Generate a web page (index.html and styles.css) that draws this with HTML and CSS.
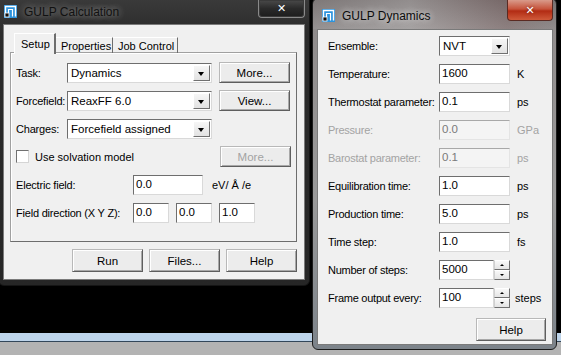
FILE: index.html
```html
<!DOCTYPE html>
<html lang="en">
<head>
    <meta charset="UTF-8">
    <title>GULP</title>
    <link rel="stylesheet" href="styles.css">
</head>
<body>
    <div class="desktop">

        <!-- GULP Calculation window -->
        <div class="window calc">
            <div class="titlebar">
                <svg class="app-icon" width="13" height="13" viewBox="0 0 13 13">
                    <rect width="13" height="13" fill="#2c93dd"/>
                    <path d="M1.5 11.5 V1.5 H11.5 V11.5" fill="none" stroke="#fff" stroke-width="1.4"/>
                    <path d="M4.5 8 V4.5 H8.5 V11.5" fill="none" stroke="#fff" stroke-width="1.2"/>
                    <rect x="1" y="8" width="4" height="4" fill="#111" stroke="#fff" stroke-width="0.8"/>
                </svg>
                <span class="title">GULP Calculation</span>
                <div class="close dark">&#10005;</div>
            </div>
            <div class="client">
                <div class="tabs">
                    <div class="tab active">Setup</div>
                    <div class="tab">Properties</div>
                    <div class="tab">Job Control</div>
                </div>
                <div class="panel">
                    <div class="row">
                        <span class="lbl lbl-short">Task:</span>
                        <div class="combo combo-wide"><span class="value">Dynamics</span><span class="drop"></span></div>
                        <button class="btn">More...</button>
                    </div>
                    <div class="row">
                        <span class="lbl lbl-short">Forcefield:</span>
                        <div class="combo combo-wide"><span class="value">ReaxFF 6.0</span><span class="drop"></span></div>
                        <button class="btn">View...</button>
                    </div>
                    <div class="row">
                        <span class="lbl lbl-short">Charges:</span>
                        <div class="combo combo-wide"><span class="value">Forcefield assigned</span><span class="drop"></span></div>
                    </div>
                    <div class="row">
                        <span class="check"></span>
                        <span class="check-text">Use solvation model</span>
                        <button class="btn disabled">More...</button>
                    </div>
                    <div class="row">
                        <span class="lbl lbl-long">Electric field:</span>
                        <div class="field f-field">0.0</div>
                        <span class="unit">eV/ Å /e</span>
                    </div>
                    <div class="row">
                        <span class="lbl lbl-long">Field direction (X Y Z):</span>
                        <div class="xyz">
                            <div class="field f-small">0.0</div>
                            <div class="field f-small">0.0</div>
                            <div class="field f-small">1.0</div>
                        </div>
                    </div>
                </div>
                <div class="actions">
                    <button class="btn">Run</button>
                    <button class="btn">Files...</button>
                    <button class="btn">Help</button>
                </div>
            </div>
        </div>

        <!-- GULP Dynamics window -->
        <div class="window dyn">
            <div class="titlebar">
                <svg class="app-icon" width="13" height="13" viewBox="0 0 13 13">
                    <rect width="13" height="13" fill="#2c93dd"/>
                    <path d="M1.5 11.5 V1.5 H11.5 V11.5" fill="none" stroke="#fff" stroke-width="1.4"/>
                    <path d="M4.5 8 V4.5 H8.5 V11.5" fill="none" stroke="#fff" stroke-width="1.2"/>
                    <rect x="1" y="8" width="4" height="4" fill="#111" stroke="#fff" stroke-width="0.8"/>
                </svg>
                <span class="title">GULP Dynamics</span>
                <div class="close red">&#10005;</div>
            </div>
            <div class="client dyn-client">
                <div class="form">
                    <div class="frow">
                        <span class="flbl">Ensemble:</span>
                        <div class="combo combo-small"><span class="value">NVT</span><span class="drop"></span></div>
                    </div>
                    <div class="frow">
                        <span class="flbl">Temperature:</span>
                        <div class="field f-dyn">1600</div>
                        <span class="unit">K</span>
                    </div>
                    <div class="frow">
                        <span class="flbl">Thermostat parameter:</span>
                        <div class="field f-dyn">0.1</div>
                        <span class="unit">ps</span>
                    </div>
                    <div class="frow off">
                        <span class="flbl">Pressure:</span>
                        <div class="field f-dyn">0.0</div>
                        <span class="unit">GPa</span>
                    </div>
                    <div class="frow off">
                        <span class="flbl">Barostat parameter:</span>
                        <div class="field f-dyn">0.1</div>
                        <span class="unit">ps</span>
                    </div>
                    <div class="frow">
                        <span class="flbl">Equilibration time:</span>
                        <div class="field f-dyn">1.0</div>
                        <span class="unit">ps</span>
                    </div>
                    <div class="frow">
                        <span class="flbl">Production time:</span>
                        <div class="field f-dyn">5.0</div>
                        <span class="unit">ps</span>
                    </div>
                    <div class="frow">
                        <span class="flbl">Time step:</span>
                        <div class="field f-dyn">1.0</div>
                        <span class="unit">fs</span>
                    </div>
                    <div class="frow">
                        <span class="flbl">Number of steps:</span>
                        <div class="field f-spin">5000</div>
                        <div class="spin"><span class="up"></span><span class="down"></span></div>
                    </div>
                    <div class="frow">
                        <span class="flbl">Frame output every:</span>
                        <div class="field f-spin">100</div>
                        <div class="spin"><span class="up"></span><span class="down"></span></div>
                        <span class="unit unit-steps">steps</span>
                    </div>
                </div>
                <div class="dyn-actions">
                    <button class="btn">Help</button>
                </div>
            </div>
        </div>

    </div>
</body>
</html>
```

FILE: styles.css
```css
body {
    margin: 0;
    padding: 0;
    font-family: "Liberation Sans", Arial, sans-serif;
    font-size: 11px;
    color: #000;
    background: #000;
    white-space: nowrap;
}

/* the desktop behind the windows */
.desktop {
    position: relative;
    width: 561px;
    height: 355px;
    overflow: hidden;
    background: linear-gradient(to bottom, #000 0 333px, #bdd4ea 333px 341px, #33475a 341px 342px, #b3b3b3 342px);
}

.window {
    position: absolute;
    box-sizing: border-box;
    display: flex;
    flex-direction: column;
}

/* left window */
.calc {
    left: -2px;
    top: -8px;
    width: 312px;
    height: 294px;
    background: linear-gradient(to bottom, #3d3d3d, #2b2b2b 40px, #262626);
    border: 1px solid #151515;
    border-radius: 6px;
}

/* right window */
.dyn {
    left: 312px;
    top: -2px;
    width: 245px;
    height: 352px;
    background: linear-gradient(to bottom, #767070, #908c8c 30px, #9a9a9a 200px, #7c838a);
    border: 1px solid #1c1c1c;
    border-radius: 6px;
}

.titlebar {
    position: relative;
    display: flex;
    align-items: center;
    flex-shrink: 0;
    box-sizing: border-box;
}

.calc .titlebar {
    height: 31px;
    padding: 6px 0 0 5px;
}

.dyn .titlebar {
    height: 30px;
    padding: 3px 0 0 9px;
    background: linear-gradient(to right, rgba(255,255,255,0.05), rgba(255,255,255,0.2) 40%, rgba(120,40,40,0.12) 80%, rgba(0,0,0,0));
}

.app-icon {
    display: block;
    flex-shrink: 0;
}

.title {
    margin-left: 7px;
    font-size: 12px;
    color: #111;
    text-shadow: 0 0 6px rgba(255,255,255,0.45), 0 0 10px rgba(255,255,255,0.3);
}

.dyn .title {
    color: #0c0c0c;
    text-shadow: 0 0 6px rgba(255,255,255,0.7), 0 0 10px rgba(255,255,255,0.4);
}

/* close buttons sit over the title bar */
.close {
    position: absolute;
    box-sizing: border-box;
    display: flex;
    justify-content: center;
    align-items: center;
    color: #fff;
    font-size: 11px;
    font-weight: bold;
    font-family: "DejaVu Sans", sans-serif;
    border-radius: 0 0 4px 4px;
}

.close.dark {
    left: 259px;
    top: 7px;
    width: 47px;
    height: 18px;
    border: 1px solid #8a8a8a;
    border-top: none;
    background: linear-gradient(to bottom, #4a4a4a, #2a2a2a 50%, #1d1d1d);
    box-shadow: inset 0 0 0 1px #3a3a3a;
}

.close.red {
    left: 194px;
    top: 1px;
    width: 46px;
    height: 21px;
    border: 1px solid #5a2a22;
    border-top: none;
    background: linear-gradient(to bottom, #d99a8a, #c6533b 45%, #b22c14 55%, #cf5a3a);
    text-shadow: 0 0 3px #6a1a0a;
}

.client {
    box-sizing: border-box;
    background: #f0f0f0;
    border: 1px solid #7a7a7a;
}

.calc .client {
    margin: 0 4px 5px 4px;
    height: 256px;
    padding: 8px 7px 0 6px;
}

.dyn .client {
    margin: 0 3px 4px 4px;
    height: 316px;
    padding: 6px 6px 0 10px;
}

/* tabs */
.tabs {
    display: flex;
    align-items: flex-end;
    height: 20px;
    padding-left: 4px;
}

.tab {
    box-sizing: border-box;
    height: 16px;
    padding: 1px 0 0 5px;
    line-height: 14px;
    border-right: 1px solid #6d6d6d;
    border-top: 1px solid #fff;
}

.tab.active {
    position: relative;
    z-index: 1;
    height: 21px;
    width: 42px;
    margin-bottom: -1px;
    padding: 3px 0 0 6px;
    background: #f0f0f0;
    border-left: 1px solid #fff;
    border-right: 2px solid #6d6d6d;
}

.tab:nth-child(2) {
    width: 57px;
}

.tab:nth-child(3) {
    width: 65px;
}

.panel {
    box-sizing: border-box;
    height: 190px;
    margin-top: -1px;
    padding: 9px 0 0 5px;
    border: 1px solid #a0a0a0;
    border-right-color: #6d6d6d;
    border-bottom-color: #6d6d6d;
    box-shadow: inset 1px 1px #fff;
    display: flex;
    flex-direction: column;
    gap: 7px;
}

.row {
    display: flex;
    align-items: center;
    height: 21px;
}

.lbl {
    flex-shrink: 0;
    letter-spacing: -0.2px;
}

.lbl-short {
    width: 51px;
}

.lbl-long {
    width: 117px;
}

/* combo boxes */
.combo {
    box-sizing: border-box;
    display: flex;
    align-items: center;
    height: 20px;
    background: #fff;
    border: 1px solid;
    border-color: #6e6e6e #d9d9d9 #d9d9d9 #6e6e6e;
    padding: 1px;
}

.combo-wide {
    width: 145px;
}

.combo-small {
    width: 71px;
}

.combo .value {
    flex: 1;
    padding-left: 2px;
    font-size: 11.5px;
}

.drop {
    position: relative;
    box-sizing: border-box;
    width: 17px;
    height: 16px;
    background: linear-gradient(to bottom, #f6f6f6, #e2e2e2);
    border: 1px solid;
    border-color: #fff #707070 #707070 #fff;
}

.drop::after {
    content: "";
    position: absolute;
    left: 4px;
    top: 6px;
    border-left: 3.5px solid transparent;
    border-right: 3.5px solid transparent;
    border-top: 4px solid #000;
}

/* buttons */
.btn {
    box-sizing: border-box;
    width: 71px;
    height: 21px;
    padding: 0;
    margin-left: 7px;
    font-family: inherit;
    font-size: 11.5px;
    color: #000;
    background: #ececec;
    border: 1px solid;
    border-color: #b8b8b8 #5e5e5e #5e5e5e #b8b8b8;
    box-shadow: inset 1px 1px #fff, inset -1px -1px #a8a8a8;
}

.btn.disabled {
    margin-left: auto;
    margin-right: 5px;
    color: #a3a3a3;
}

.check {
    box-sizing: border-box;
    width: 13px;
    height: 13px;
    background: #fff;
    border: 1px solid;
    border-color: #707070 #d5d5d5 #d5d5d5 #707070;
}

.check-text {
    margin-left: 6px;
}

/* text fields */
.field {
    box-sizing: border-box;
    height: 20px;
    padding: 2px 0 0 2px;
    background: #fff;
    font-size: 11.5px;
    border: 1px solid;
    border-color: #6e6e6e #d9d9d9 #d9d9d9 #6e6e6e;
}

.f-field {
    width: 70px;
}

.f-small {
    width: 36px;
}

.xyz {
    display: flex;
    gap: 7px;
}

.unit {
    margin-left: 9px;
}

.actions {
    display: flex;
    justify-content: flex-end;
    margin-top: 7px;
}

.actions .btn {
    height: 23px;
    margin-left: 6px;
}

/* dynamics form */
.form {
    display: flex;
    flex-direction: column;
    gap: 8px;
}

.frow {
    display: flex;
    align-items: center;
    height: 20px;
}

.flbl {
    width: 111px;
    flex-shrink: 0;
    letter-spacing: -0.25px;
}

.f-dyn {
    width: 71px;
}

.frow .unit {
    margin-left: 7px;
}

.frow.off .flbl,
.frow.off .unit {
    color: #a3a3a3;
}

.frow.off .field {
    background: #f4f4f4;
    color: #7a7a7a;
    border-color: #a8a8a8 #e4e4e4 #e4e4e4 #a8a8a8;
}

.f-spin {
    width: 55px;
}

.spin {
    box-sizing: border-box;
    width: 16px;
    height: 20px;
    display: flex;
    flex-direction: column;
}

.spin span {
    position: relative;
    flex: 1;
    background: linear-gradient(to bottom, #f8f8f8, #e4e4e4);
    border: 1px solid;
    border-color: #fff #707070 #707070 #d0d0d0;
}

.spin .up::after,
.spin .down::after {
    content: "";
    position: absolute;
    left: 5px;
    top: 3px;
    border-left: 2px solid transparent;
    border-right: 2px solid transparent;
}

.spin .up::after {
    border-bottom: 2px solid #000;
}

.spin .down::after {
    border-top: 2px solid #000;
}

.unit-steps {
    margin-left: 5px !important;
}

.dyn-actions {
    display: flex;
    justify-content: flex-end;
    margin-top: 10px;
}

.dyn-actions .btn {
    width: 70px;
    height: 23px;
}
```
